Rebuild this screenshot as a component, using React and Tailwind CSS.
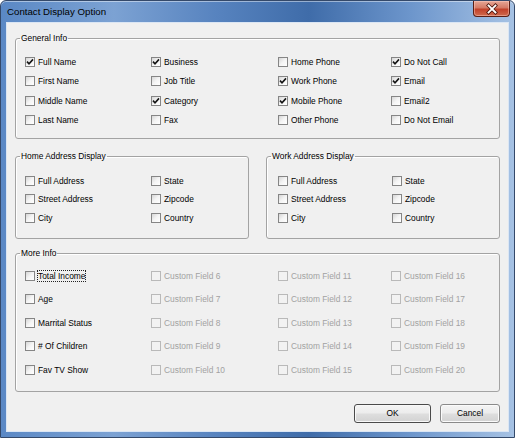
import React from 'react';

const general = [
  ['Full Name', true], ['Business', true], ['Home Phone', false], ['Do Not Call', true],
  ['First Name', false], ['Job Title', false], ['Work Phone', true], ['Email', true],
  ['Middle Name', false], ['Category', true], ['Mobile Phone', true], ['Email2', false],
  ['Last Name', false], ['Fax', false], ['Other Phone', false], ['Do Not Email', false],
];

const address = ['Full Address', 'State', 'Street Address', 'Zipcode', 'City', 'Country'];

const moreLeft = ['Total Income', 'Age', 'Marrital Status', '# Of Children', 'Fav TV Show'];

const Box = ({ checked, disabled }) => (
  <span
    className={`flex h-[10px] w-[10px] shrink-0 items-center justify-center border ${
      disabled
        ? 'border-[#b9b9b9] bg-[#f2f2f2]'
        : 'border-[#858585] bg-gradient-to-br from-[#d6d6d6] via-[#f4f4f4] to-white'
    }`}
  >
    {checked && (
      <svg width="8" height="8" viewBox="0 0 8 8">
        <path d="M1 3.6 L3 5.8 L7 1.4" fill="none" stroke="#151515" strokeWidth="1.6" />
      </svg>
    )}
  </span>
);

const Item = ({ label, checked, disabled, focus }) => (
  <div className="flex items-center">
    <Box checked={checked} disabled={disabled} />
    <span
      className={`ml-[3px] whitespace-nowrap leading-[10px] ${disabled ? 'text-[#a2a2a2]' : 'text-black'} ${
        focus ? 'outline-1 outline-dotted outline-[#222]' : ''
      }`}
    >
      {label}
    </span>
  </div>
);

const Legend = ({ children }) => (
  <legend className="ml-[4px] px-[1px] leading-[11px] text-black">{children}</legend>
);

export default function App() {
  return (
    <div className="flex h-[438px] w-[515px] flex-col overflow-hidden rounded-t-[6px] border border-[#34496a] bg-[linear-gradient(90deg,#5a88c5_0%,#7ca2d3_22%,#5783bf_42%,#3f6ca9_60%,#6d96cc_80%,#a6c2e4_100%)] px-[5px] pb-[5px] font-['Liberation_Sans',Arial,sans-serif] text-[8.4px] shadow-[inset_0_1px_0_rgba(255,255,255,0.45)]">
      {/* title bar */}
      <div className="flex h-[21px] shrink-0 items-start justify-between">
        <span className="mt-[5px] pl-[1px] text-[9.7px] leading-[12px] text-black">Contact Display Option</span>
        <div className="mr-[-1px] flex h-[16px] w-[37px] items-center justify-center rounded-b-[4px] border border-t-0 border-[#5a1e14] bg-[linear-gradient(180deg,#e6a696_0%,#d47a66_45%,#c2412a_55%,#cf6a4d_100%)] shadow-[inset_0_0_0_1px_rgba(255,210,200,0.45)]">
          <svg width="14" height="12" viewBox="0 0 14 12">
            <path d="M3.5 2.5 L10.5 9.5 M10.5 2.5 L3.5 9.5" stroke="#4a140c" strokeWidth="3.4" strokeLinecap="square" />
            <path d="M3.5 2.5 L10.5 9.5 M10.5 2.5 L3.5 9.5" stroke="#ffffff" strokeWidth="1.8" strokeLinecap="square" />
          </svg>
        </div>
      </div>

      {/* client area */}
      <div className="flex h-[410px] flex-col border border-[#dbe6f4] bg-[#f0f0f0] px-[8px] pt-[10px]">
        <fieldset className="h-[106px] min-w-0 rounded-[3px] border border-[#a3a3a3] shadow-[inset_1px_1px_0_#ffffff]">
          <Legend>General Info</Legend>
          <div className="mt-[8px] grid grid-cols-[126px_127px_113px_1fr] grid-rows-[repeat(4,19.5px)] pl-[9px]">
            {general.map(([label, checked]) => (
              <Item key={label} label={label} checked={checked} />
            ))}
          </div>
        </fieldset>

        <div className="mt-[11.5px] flex justify-between">
          <fieldset className="h-[88px] w-[234px] min-w-0 rounded-[3px] border border-[#a3a3a3] shadow-[inset_1px_1px_0_#ffffff]">
            <Legend>Home Address Display</Legend>
            <div className="mt-[9.75px] grid grid-cols-[126px_1fr] grid-rows-[repeat(3,18.5px)] pl-[9px]">
              {address.map((label) => (
                <Item key={label} label={label} />
              ))}
            </div>
          </fieldset>
          <fieldset className="h-[88px] w-[234px] min-w-0 rounded-[3px] border border-[#a3a3a3] shadow-[inset_1px_1px_0_#ffffff]">
            <Legend>Work Address Display</Legend>
            <div className="mt-[9.75px] grid grid-cols-[114px_1fr] grid-rows-[repeat(3,18.5px)] pl-[11px]">
              {address.map((label) => (
                <Item key={label} label={label} />
              ))}
            </div>
          </fieldset>
        </div>

        <fieldset className="mt-[9.5px] h-[144px] min-w-0 rounded-[3px] border border-[#a3a3a3] shadow-[inset_1px_1px_0_#ffffff]">
          <Legend>More Info</Legend>
          <div className="mt-[4.75px] grid grid-cols-[126px_127px_113px_1fr] grid-rows-[repeat(5,23.5px)] pl-[9px]">
            {moreLeft.map((label, i) => (
              <React.Fragment key={label}>
                <Item label={label} focus={i === 0} />
                <Item label={`Custom Field ${6 + i}`} disabled />
                <Item label={`Custom Field ${11 + i}`} disabled />
                <Item label={`Custom Field ${16 + i}`} disabled />
              </React.Fragment>
            ))}
          </div>
        </fieldset>

        <div className="mt-[12px] flex justify-end gap-[9px]">
          <button className="h-[19px] w-[77px] rounded-[3px] border border-[#4a4a4a] bg-[linear-gradient(180deg,#f4f4f4_0%,#ececec_48%,#dedede_52%,#d2d2d2_100%)] leading-[17px] text-black shadow-[inset_0_0_0_1px_#f8f8f8]">
            OK
          </button>
          <button className="h-[19px] w-[60px] rounded-[3px] border border-[#8a8a8a] bg-[linear-gradient(180deg,#f4f4f4_0%,#ececec_48%,#dedede_52%,#d2d2d2_100%)] leading-[17px] text-black shadow-[inset_0_0_0_1px_#fbfbfb]">
            Cancel
          </button>
        </div>
      </div>
    </div>
  );
}
